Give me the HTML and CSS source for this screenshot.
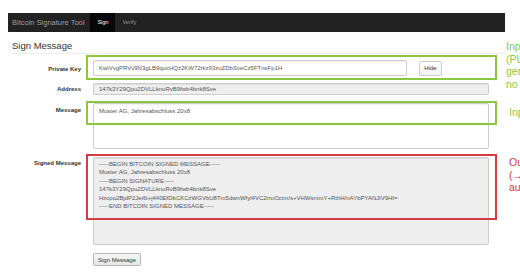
FILE: index.html
```html
<!DOCTYPE html>
<html lang="en">
<head>
  <meta charset="UTF-8">
  <meta name="viewport" content="width=device-width, initial-scale=1.0">
  <title>Bitcoin Signature Tool</title>
  <link rel="stylesheet" href="styles.css">
</head>
<body>
  <nav class="navbar">
    <span class="brand">Bitcoin Signature Tool</span>
    <a class="tab active" href="#">Sign</a>
    <a class="tab" href="#">Verify</a>
  </nav>

  <div class="page">
    <h1>Sign Message</h1>

    <form class="sign-form">
      <!-- Private key -->
      <div class="row">
        <label class="lbl lbl-key" for="privKey">Private Key</label>
        <div class="ctrl ctrl-key">
          <input type="text" id="privKey" class="field key-field" value="KwiVvgPRVv9N3gLB9qucHQz2KW72rkz93zuZDbSveCz5FTnsFp1H">
          <button type="button" class="btn btn-hide">Hide</button>
        </div>
        <div class="note-box green">
          <span class="note green-text">Input<br>(PUBLIC<br>generated<br>no internet</span>
        </div>
      </div>

      <!-- Address -->
      <div class="row row-address">
        <label class="lbl lbl-address" for="address">Address</label>
        <div class="ctrl">
          <input type="text" id="address" class="field field-readonly address-field" value="147k3Y29Qpu2DVLLknuRvB9fwb4bnk8Sve" readonly>
        </div>
      </div>

      <!-- Message -->
      <div class="row row-gap">
        <label class="lbl" for="message">Message</label>
        <div class="ctrl">
          <textarea id="message" class="field area message-area">Muster AG, Jahresabschluss 20x8</textarea>
        </div>
        <div class="note-box green msg-box">
          <span class="note green-text note-inset">Input</span>
        </div>
      </div>

      <!-- Signed output -->
      <div class="row row-gap">
        <label class="lbl lbl-signed" for="signed">Signed Message</label>
        <div class="ctrl">
          <textarea id="signed" class="field field-readonly area signed-area" readonly>-----BEGIN BITCOIN SIGNED MESSAGE-----
Muster AG, Jahresabschluss 20x8
-----BEGIN SIGNATURE-----
147k3Y29Qpu2DVLLknuRvB9fwb4bnk8Sve
Hzcpu2BjdP2Jei6i+j440EfDbCKCzWGVbU8Tm5dwnWfyl4VC2rroOctm/s+VHWsrxmY+RthH/nAYbPYANJlV9HI=
-----END BITCOIN SIGNED MESSAGE-----</textarea>
        </div>
        <div class="note-box red signed-box">
          <span class="note red-text note-inset">Output<br>(&rarr; copy<br>automatic</span>
        </div>
      </div>

      <div class="row row-gap">
        <span class="lbl"></span>
        <div class="ctrl">
          <button type="button" class="btn btn-sign">Sign Message</button>
        </div>
      </div>
    </form>
  </div>
</body>
</html>
```

FILE: styles.css
```css
body {
  margin: 0;
  font-family: "Liberation Sans", Arial, sans-serif;
  color: #333;
  background: #fff;
  overflow: hidden;
}
.navbar {
  display: flex;
  height: 19px;
  margin: 13px 15px 0 8px;
  background-color: #222;
}
.brand {
  padding: 0 6px 0 4px;
  font-size: 7.5px;
  line-height: 19px;
  color: #9d9d9d;
}
.tab {
  padding: 0 7px;
  font-size: 5.5px;
  line-height: 19px;
  color: #9d9d9d;
  text-decoration: none;
}
.tab.active {
  color: #fff;
  background-color: #080808;
}
.page {
  margin-left: 12px;
  width: 493px;
}
h1 {
  margin: 8px 0 0;
  padding-bottom: 1px;
  font-size: 9.5px;
  font-weight: normal;
  line-height: 12px;
  border-bottom: 1px solid #eee;
}
.sign-form {
  margin-top: 6px;
}
.row {
  position: relative;
  display: flex;
  gap: 12px;
}
.row-address {
  margin-top: 7px;
}
.row-gap {
  margin-top: 8px;
}
.lbl {
  flex: 0 0 69px;
  padding-top: 3px;
  font-size: 6px;
  font-weight: bold;
  line-height: 8px;
  text-align: right;
  color: #333;
}
.lbl-key {
  padding-top: 5px;
}
.lbl-address {
  padding-top: 2px;
}
.lbl-signed {
  padding-top: 2px;
}
.ctrl {
  width: 396px;
  display: flex;
  align-items: center;
}
.ctrl-key {
  gap: 12px;
}
.field {
  box-sizing: border-box;
  margin: 0;
  padding: 0 5px;
  font-family: "Liberation Sans", Arial, sans-serif;
  font-size: 6px;
  color: #555;
  background: #fff;
  border: 1px solid #ccc;
  border-radius: 2px;
  box-shadow: inset 0 1px 1px rgba(0, 0, 0, 0.06);
}
.field-readonly {
  background-color: #eee;
}
.key-field {
  width: 314px;
  height: 16px;
}
.address-field {
  width: 100%;
  height: 12px;
}
.area {
  width: 100%;
  padding: 2px 5px;
  line-height: 8.4px;
  resize: none;
  overflow: hidden;
  white-space: pre;
}
.message-area {
  height: 46px;
  padding-top: 3px;
}
.signed-area {
  height: 88px;
}
.btn {
  box-sizing: border-box;
  margin: 0;
  font-family: "Liberation Sans", Arial, sans-serif;
  font-size: 6px;
  color: #333;
  border-radius: 2px;
}
.btn-hide {
  width: 23px;
  height: 15px;
  padding: 0;
  background: linear-gradient(#fff, #f2f2f2);
  border: 1px solid #ccc;
}
.btn-sign {
  width: 48px;
  height: 13px;
  padding: 0;
  background: linear-gradient(#f6f6f6, #e6e6e6);
  border: 1px solid #b5b5b5;
}

/* annotation boxes drawn over the form */
.note-box {
  position: absolute;
  box-sizing: border-box;
  left: 74px;
  top: -5px;
  width: 411px;
  height: 25px;
  pointer-events: none;
}
.note-box.green {
  border: 2px solid #8cc63f;
}
.note-box.red {
  border: 2px solid #d43d3d;
}
.msg-box {
  top: -2px;
  height: 24px;
}
.signed-box {
  top: -3px;
  height: 66px;
}
.note {
  position: absolute;
  left: 418px;
  top: -17px;
  font-size: 10.5px;
  line-height: 12.7px;
  white-space: nowrap;
}
.note-inset {
  left: 421px;
  top: 3px;
}
.signed-box .note-inset {
  top: 0;
}
.green-text {
  color: #8cc63f;
}
.red-text {
  color: #d43d3d;
}
```
